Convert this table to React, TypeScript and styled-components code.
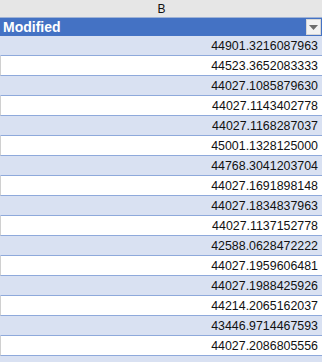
import React from "react";
import styled, {createGlobalStyle} from "styled-components";

const values = [
  "44901.3216087963",
  "44523.3652083333",
  "44027.1085879630",
  "44027.1143402778",
  "44027.1168287037",
  "45001.1328125000",
  "44768.3041203704",
  "44027.1691898148",
  "44027.1834837963",
  "44027.1137152778",
  "42588.0628472222",
  "44027.1959606481",
  "44027.1988425926",
  "44214.2065162037",
  "43446.9714467593",
  "44027.2086805556",
];

const GlobalStyle = createGlobalStyle`
  html, body {
    margin: 0;
    padding: 0;
    background: #ffffff;
    overflow: hidden;
  }
`;

const App = () => {
  return (
    <>
      <GlobalStyle />
      <Sheet>
        <ColumnHeader>B</ColumnHeader>
        <TableHeader>
          <span>Modified</span>
          <FilterButton>
            <svg width="9" height="5" viewBox="0 0 9 5">
              <path d="M0 0 H9 L4.5 5 Z" fill="#6d6d6d" />
            </svg>
          </FilterButton>
        </TableHeader>
        {values.map((v, i) => (
          <Row key={i} $banded={i % 2 === 0}>
            {v}
          </Row>
        ))}
        <Row $banded />
      </Sheet>
    </>
  );
};

export default App;

const Sheet = styled.div`
  width: 322px;
  height: 362px;
  overflow: hidden;
  display: flex;
  flex-direction: column;
  font-family: "Liberation Sans", Arial, sans-serif;
`;

const ColumnHeader = styled.div`
  flex: none;
  height: 17px;
  background: #e6e6e6;
  border-bottom: 1px solid #9fb3d6;
  display: flex;
  align-items: center;
  justify-content: center;
  font-size: 12px;
  color: #111;
  padding-left: 1px;
`;

const TableHeader = styled.div`
  flex: none;
  height: 18px;
  background: #4472c4;
  display: flex;
  align-items: center;
  justify-content: space-between;
  padding-left: 3px;
  color: #ffffff;
  font-weight: bold;
  font-size: 14px;
`;

const FilterButton = styled.div`
  width: 15px;
  height: 16px;
  margin-right: 1px;
  background: #f2f2f2;
  border: 1px solid #d6d6d6;
  box-sizing: border-box;
  display: flex;
  align-items: center;
  justify-content: center;
`;

const Row = styled.div<{$banded?: boolean}>`
  flex: none;
  height: 19px;
  border-bottom: 1px solid #8ea9db;
  border-left: 1px solid ${(p) => (p.$banded ? "#d9e1f2" : "#d0d0d0")};
  background: ${(p) => (p.$banded ? "#d9e1f2" : "#ffffff")};
  display: flex;
  align-items: center;
  justify-content: flex-end;
  padding-right: 4px;
  font-size: 12.4px;
  color: #111;
`;
